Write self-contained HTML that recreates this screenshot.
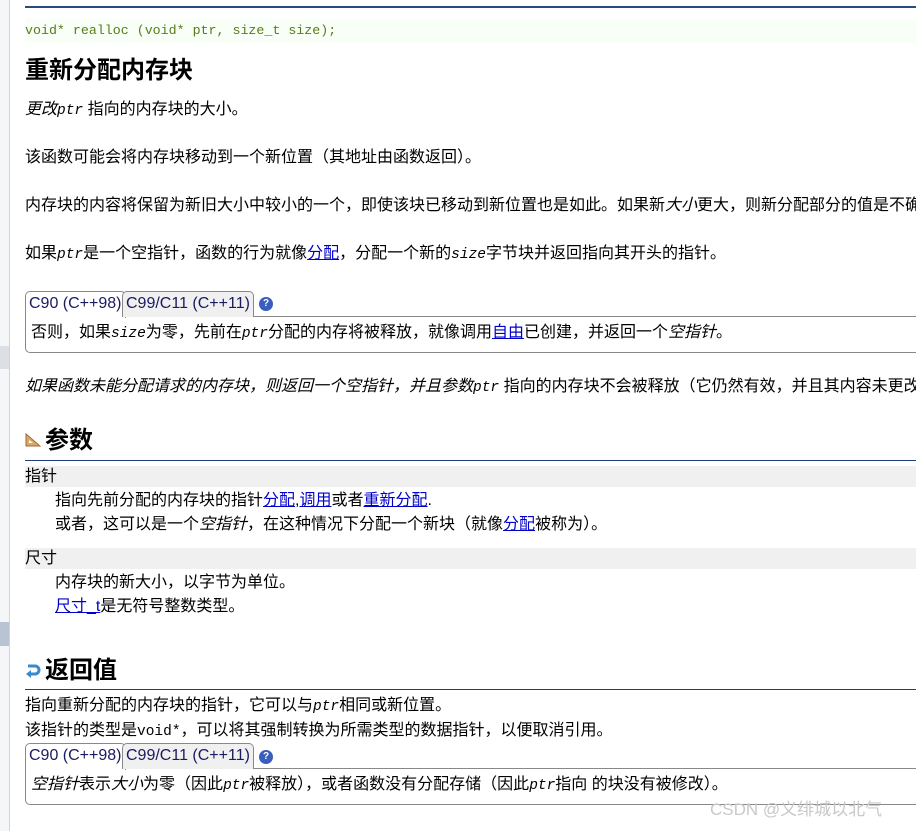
<!DOCTYPE html>
<html><head><meta charset="utf-8"><style>
html,body{margin:0;width:916px;height:831px;overflow:hidden}
body{background:#fff;font-family:"Liberation Sans","Noto Sans CJK SC",sans-serif;font-size:16px;color:#000}
#w{position:relative;width:916px;height:831px;overflow:hidden}
.a{position:absolute;white-space:nowrap;line-height:20px;overflow:hidden;right:0}
.m{font-family:"Liberation Mono","DejaVu Sans Mono",monospace;font-size:14.5px}
i{font-style:italic}
a{color:#00c;text-decoration:underline}
h{position:absolute;font-weight:bold;font-size:24px;white-space:nowrap;line-height:30px}
.rule{position:absolute;left:25px;right:0;height:1px;background:#1e3c80}
.box{position:absolute;left:25px;right:0;border:1px solid #888;border-right:none;border-radius:5px 0 0 5px;background:#fff}
.tab{position:absolute;border:1px solid #888;border-bottom:none;border-radius:5px 5px 0 0;padding:0 3px;line-height:24px;font-size:16px;color:#1a1a60;background:#f0f0f0}
.q{position:absolute;width:14px;height:14px;border-radius:50%;background:#3a5ec0;color:#fff;font-size:10px;font-weight:bold;text-align:center;line-height:14px}
.bar{position:absolute;left:25px;right:0;height:21px;background:#f0f0f0}
</style></head><body><div id="w">
<div style="position:absolute;left:0;top:0;width:9px;height:831px;background:#f5f6f8;border-right:1px solid #d0d4da"></div>
<div style="position:absolute;left:0;top:346px;width:9px;height:23px;background:#dcdfe4"></div>
<div style="position:absolute;left:0;top:622px;width:9px;height:24px;background:#b8c4d4"></div>
<div style="position:absolute;left:25px;right:0;top:6px;height:2px;background:#2a4a80"></div>
<div style="position:absolute;left:25px;right:0;top:19px;height:24px;background:#f8fff6"></div>
<div class="a m" style="left:25px;top:21px;color:#5a7a1a;font-size:13.3px">void* realloc (void* ptr, size_t size);</div>
<h style="left:25px;top:56px">重新分配内存块</h>
<div class="a" style="left:25px;top:100px"><i>更改</i><i class="m">ptr</i> 指向的内存块的大小。</div>
<div class="a" style="left:25px;top:148px">该函数可能会将内存块移动到一个新位置（其地址由函数返回）。</div>
<div class="a" style="left:25px;top:196px">内存块的内容将保留为新旧大小中较小的一个，即使该块已移动到新位置也是如此。如果新<i>大小</i>更大，则新分配部分的值是不确定的。</div>
<div class="a" style="left:25px;top:244px">如果<i class="m">ptr</i>是一个空指针，函数的行为就像<a>分配</a>，分配一个新的<i class="m">size</i>字节块并返回指向其开头的指针。</div>
<div class="box" style="top:316px;height:35px;border-top-left-radius:0"></div>
<div class="tab" style="left:25px;top:291px;height:26px;background:#fff">C90 (C++98)</div>
<div class="tab" style="left:122px;top:291px;height:25px">C99/C11 (C++11)</div>
<div class="q" style="left:259px;top:297px">?</div>
<div class="a" style="left:31px;top:323px">否则，如果<i class="m">size</i>为零，先前在<i class="m">ptr</i>分配的内存将被释放，就像调用<a>自由</a>已创建，并返回一个<i>空指针</i>。</div>
<div class="a" style="left:25px;top:377px"><i>如果函数未能分配请求的内存块，则返回一个空指针，并且参数</i><i class="m">ptr</i> 指向的内存块不会被释放（它仍然有效，并且其内容未更改）。</div>
<svg style="position:absolute;left:25px;top:433px" width="16" height="14"><polygon points="1,1 1,13 15,13" fill="#d9a86a" stroke="#a06a30"/><polygon points="4,7 4,10 8,10" fill="#fff"/></svg>
<h style="left:45px;top:426px">参数</h>
<div class="rule" style="top:460px"></div>
<div class="bar" style="top:466px"></div>
<div class="a" style="left:25px;top:467px">指针</div>
<div class="a" style="left:55px;top:491px">指向先前分配的内存块的指针<a>分配</a>,<a>调用</a>或者<a>重新分配</a>.</div>
<div class="a" style="left:55px;top:515px">或者，这可以是一个<i>空指针</i>，在这种情况下分配一个新块（就像<a>分配</a>被称为）。</div>
<div class="bar" style="top:548px"></div>
<div class="a" style="left:25px;top:549px">尺寸</div>
<div class="a" style="left:55px;top:573px">内存块的新大小，以字节为单位。</div>
<div class="a" style="left:55px;top:597px"><a>尺寸_t</a>是无符号整数类型。</div>
<svg style="position:absolute;left:25px;top:664px" width="16" height="14"><path d="M3,2 H10 A4,4 0 0 1 10,10 H5" fill="none" stroke="#3a8ad0" stroke-width="3"/><polygon points="1,10 6,6 6,14" fill="#3a8ad0"/></svg>
<h style="left:45px;top:656px">返回值</h>
<div class="rule" style="top:689px"></div>
<div class="a" style="left:25px;top:696px">指向重新分配的内存块的指针，它可以与<i class="m">ptr</i>相同或新位置。</div>
<div class="a" style="left:25px;top:721px">该指针的类型是<span class="m">void*</span>，可以将其强制转换为所需类型的数据指针，以便取消引用。</div>
<div class="box" style="top:768px;height:35px;border-top-left-radius:0"></div>
<div class="tab" style="left:25px;top:743px;height:26px;background:#fff">C90 (C++98)</div>
<div class="tab" style="left:122px;top:743px;height:25px">C99/C11 (C++11)</div>
<div class="q" style="left:259px;top:750px">?</div>
<div class="a" style="left:31px;top:775px"><i>空指针</i>表示<i>大小</i>为零（因此<i class="m">ptr</i>被释放），或者函数没有分配存储（因此<i class="m">ptr</i>指向 的块没有被修改）。</div>
<div class="a" style="left:710px;top:800px;font-size:17px;color:#c8c8c8">CSDN @义绯城以北气</div>
</div></body></html>
